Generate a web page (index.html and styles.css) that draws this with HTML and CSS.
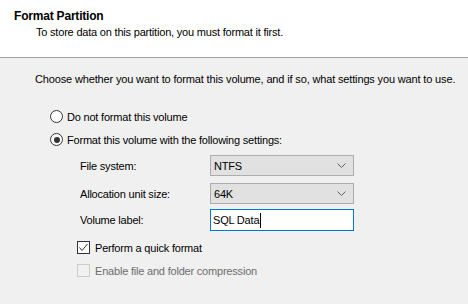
FILE: index.html
```html
<!DOCTYPE html>
<html lang="en">
<head>
    <meta charset="UTF-8">
    <title>Format Partition</title>
    <link rel="stylesheet" href="styles.css">
</head>
<body>
    <div class="header">
        <div class="title">Format Partition</div>
        <div class="subtitle">To store data on this partition, you must format it first.</div>
    </div>

    <div class="content">
        <p class="intro">Choose whether you want to format this volume, and if so, what settings you want to use.</p>

        <div class="options">
            <div class="radio-row">
                <span class="radio"></span>
                <span>Do not format this volume</span>
            </div>
            <div class="radio-row">
                <span class="radio checked"></span>
                <span>Format this volume with the following settings:</span>
            </div>

            <div class="settings">
                <div class="field field-1">
                    <span class="label">File system:</span>
                    <div class="combo">
                        <span>NTFS</span>
                        <svg class="chevron" width="9" height="5" viewBox="0 0 9 5"><path d="M0.5 0.5 L4.5 4.5 L8.5 0.5" fill="none" stroke="#606060" stroke-width="1"/></svg>
                    </div>
                </div>
                <div class="field field-2">
                    <span class="label">Allocation unit size:</span>
                    <div class="combo">
                        <span>64K</span>
                        <svg class="chevron" width="9" height="5" viewBox="0 0 9 5"><path d="M0.5 0.5 L4.5 4.5 L8.5 0.5" fill="none" stroke="#606060" stroke-width="1"/></svg>
                    </div>
                </div>
                <div class="field field-3">
                    <span class="label">Volume label:</span>
                    <div class="textbox"><span>SQL Data</span><span class="caret"></span></div>
                </div>

                <div class="check-row quick">
                    <span class="checkbox">
                        <svg width="11" height="11" viewBox="0 0 11 11"><path d="M1.5 5.5 L4 8.5 L9.5 2" fill="none" stroke="#333" stroke-width="1"/></svg>
                    </span>
                    <span>Perform a quick format</span>
                </div>
                <div class="check-row disabled">
                    <span class="checkbox"></span>
                    <span>Enable file and folder compression</span>
                </div>
            </div>
        </div>
    </div>
</body>
</html>
```

FILE: styles.css
```css
body {
    margin: 0;
    font-family: "Liberation Sans", Arial, sans-serif;
    font-size: 11px;
    letter-spacing: -0.2px;
    line-height: 14px;
    color: #000;
    background: #f0f0f0;
    width: 468px;
    height: 304px;
    overflow: hidden;
}
.header {
    background: #fff;
    height: 58px;
    box-sizing: border-box;
    padding: 9px 0 0 14px;
    border-bottom: 1px solid #a0a0a0;
}
.title {
    font-weight: bold;
    font-size: 12px;
    letter-spacing: -0.2px;
}
.subtitle {
    margin-top: 2px;
    padding-left: 22px;
}
.content {
    padding: 14px 0 0 35px;
}
.intro {
    margin: 0;
    letter-spacing: -0.15px;
    white-space: nowrap;
}
.options {
    margin-top: 19px;
    padding-left: 15px;
}
.radio-row {
    display: flex;
    align-items: center;
    height: 23px;
    gap: 4px;
}
.radio {
    width: 11px;
    height: 11px;
    border: 1px solid #333;
    border-radius: 50%;
    background: #fff;
    position: relative;
}
.radio.checked::after {
    content: "";
    position: absolute;
    left: 2.5px;
    top: 2.5px;
    width: 6px;
    height: 6px;
    border-radius: 50%;
    background: #333;
}
.settings {
    padding-left: 15px;
    padding-top: 4px;
}
.field {
    display: flex;
    align-items: center;
    margin-left: 15px;
}
.label {
    width: 130px;
}
.field-2 {
    margin-top: 7px;
}
.field-3 {
    margin-top: 5px;
}
.combo {
    width: 144px;
    height: 21px;
    box-sizing: border-box;
    border: 1px solid #adadad;
    background: #e1e1e1;
    display: flex;
    align-items: center;
    justify-content: space-between;
    padding: 0 7px 0 3px;
}
.textbox {
    width: 144px;
    height: 22px;
    box-sizing: border-box;
    border: 1px solid #0078d7;
    background: #fff;
    display: flex;
    align-items: center;
    padding-left: 2px;
}
.caret {
    width: 1px;
    height: 15px;
    background: #000;
    margin-left: 1px;
}
.check-row {
    display: flex;
    align-items: center;
    gap: 5px;
    height: 23px;
    margin-left: 12px;
}
.check-row.quick {
    margin-top: 5px;
}
.checkbox {
    width: 11px;
    height: 11px;
    border: 1px solid #333;
    background: #fff;
    display: flex;
    align-items: center;
    justify-content: center;
}
.check-row.disabled {
    color: #6d6d6d;
}
.check-row.disabled .checkbox {
    border-color: #cccccc;
    background: #f0f0f0;
}
```
